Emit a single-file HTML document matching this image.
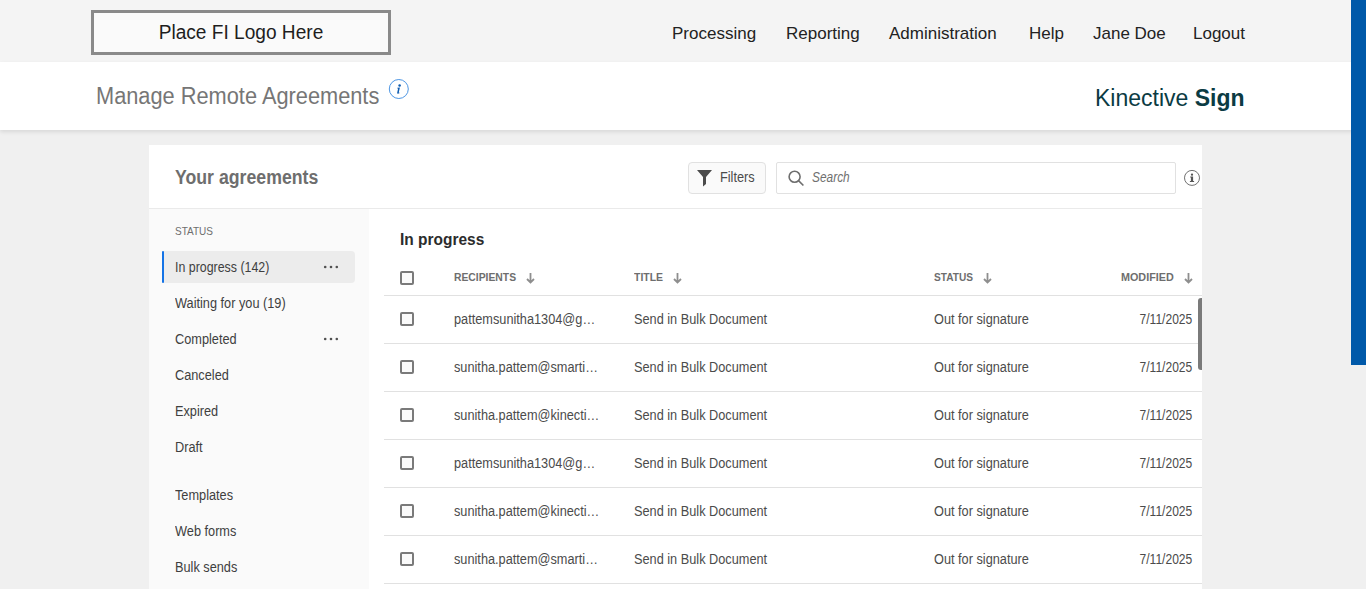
<!DOCTYPE html>
<html><head><meta charset="utf-8">
<style>
*{box-sizing:border-box;margin:0;padding:0}
html,body{width:1366px;height:589px;overflow:hidden}
body{background:#f0f0f0;font-family:"Liberation Sans",sans-serif;position:relative}
.abs{position:absolute;white-space:nowrap}
.sx{transform:scaleX(0.91);transform-origin:0 0}
.sxr{transform:scaleX(0.91);transform-origin:100% 0}
#top{left:0;top:0;width:1366px;height:62px;background:#f4f4f4}
#logo{left:91px;top:10px;width:300px;height:45px;border:3px solid #8a8a8a;background:#fafafa}
#logotxt{left:0;top:0;width:294px;height:39px;text-align:center;font-size:20px;line-height:39px;color:#1e1e1e;transform:scaleX(.955)}
.nav{top:24px;font-size:17px;color:#222;line-height:20px}
#band{left:0;top:62px;width:1366px;height:68px;background:#fff;box-shadow:0 2px 4px rgba(0,0,0,.10)}
#title{left:96px;top:83px;font-size:23px;color:#767676;line-height:26px;transform:scaleX(.947);transform-origin:0 0}
#brand{left:1095px;top:85px;font-size:23px;color:#0b3b43;line-height:26px}
#card{left:149px;top:145px;width:1053px;height:444px;background:#fff}
#yourag{left:175px;top:166px;font-size:20px;font-weight:bold;color:#6e6e6e;line-height:22px;transform:scaleX(.885)!important}
#filters{left:688px;top:162px;width:78px;height:32px;border:1px solid #e1e1e1;border-radius:4px;background:#fafafa}
#search{left:776px;top:162px;width:400px;height:32px;border:1px solid #e1e1e1;border-radius:2px;background:#fff}
#hline{left:149px;top:208px;width:1053px;height:1px;background:#eaeaea}
#side{left:149px;top:209px;width:220px;height:380px;background:#fafafa}
.side{left:175px;font-size:14px;color:#3f3f3f;line-height:16px}
#sel{left:163px;top:251px;width:192px;height:32px;background:#ececec;border-radius:0 4px 4px 0}
#selb{left:162px;top:251px;width:2px;height:32px;background:#1473e6;border-radius:1px}
.cb{left:400px;width:14px;height:14px;border:2px solid #7a7a7a;border-radius:2px;background:#fafafa}
.th{font-size:11px;font-weight:bold;color:#6e6e6e;line-height:14px}
.td{font-size:14px;color:#4b4b4b;line-height:16px}
.rl{left:384px;width:818px;height:1px;background:#e1e1e1}
#blue{left:1351px;top:0;width:15px;height:365px;background:#0059a9}
#thumb{left:1198px;top:298px;width:4px;height:72px;background:#7a7a7a;border-radius:3px 0 0 3px}
</style></head><body>
<div id="top" class="abs"></div>
<div id="logo" class="abs"><div id="logotxt" class="abs">Place FI Logo Here</div></div>
<div class="abs nav" style="left:672px">Processing</div>
<div class="abs nav" style="left:786px">Reporting</div>
<div class="abs nav" style="left:889px">Administration</div>
<div class="abs nav" style="left:1029px">Help</div>
<div class="abs nav" style="left:1093px">Jane Doe</div>
<div class="abs nav" style="left:1193px">Logout</div>
<div id="band" class="abs"></div>
<div id="title" class="abs">Manage Remote Agreements</div>
<svg class="abs" style="left:388px;top:79px" width="22" height="22" viewBox="0 0 22 22"><circle cx="10.8" cy="10" r="9.5" fill="none" stroke="#3a8ae0" stroke-width=".9"/><circle cx="11.6" cy="6.4" r="1.25" fill="#0d5bb0"/><path d="M9.3 8.7L11.9 8.4L10.8 13.2Q10.7 13.9 11.6 13.5L11.4 14.3Q9.9 15.1 9.4 14.6Q9 14.2 9.3 13.2L10.1 9.6L9.2 9.6Z" fill="#0d5bb0"/></svg>
<div id="brand" class="abs">Kinective <b>Sign</b></div>
<div id="blue" class="abs"></div>
<div id="card" class="abs"></div>
<div id="yourag" class="abs sx">Your agreements</div>
<div id="filters" class="abs"></div>
<svg class="abs" style="left:697px;top:170px" width="16" height="17" viewBox="0 0 16 17"><path d="M0 0H15L9 7V14L6 16.5V7Z" fill="#4b4b4b"/></svg>
<div class="abs td sx" style="left:720px;top:169px;color:#4b4b4b">Filters</div>
<div id="search" class="abs"></div>
<svg class="abs" style="left:786px;top:168px" width="20" height="20" viewBox="0 0 20 20"><circle cx="8.6" cy="8.7" r="5.5" fill="none" stroke="#6e6e6e" stroke-width="1.6"/><path d="M12.5 12.6L17.4 17.5" stroke="#6e6e6e" stroke-width="1.6"/></svg>
<div class="abs td sx" style="left:812px;top:169px;color:#707070;font-style:italic;transform:scaleX(.85)">Search</div>
<svg class="abs" style="left:1183px;top:169px" width="18" height="18" viewBox="0 0 18 18"><circle cx="9" cy="8.9" r="7.5" fill="none" stroke="#707070" stroke-width="1"/><circle cx="9" cy="5.7" r="1.15" fill="#555"/><path d="M7.2 7.6H10.1V12.1H11.1V13.1H6.9V12.1H7.9V8.5H7.2Z" fill="#555"/></svg>
<div id="hline" class="abs"></div>
<div id="side" class="abs"></div>
<div class="abs th sx" style="left:175px;top:224px;font-weight:normal;font-size:11px">STATUS</div>
<div id="sel" class="abs"></div>
<div id="selb" class="abs"></div>
<div class="abs side sx" style="top:259px;transform:scaleX(.885)">In progress (142)</div>
<svg class="abs" style="left:322px;top:265px" width="18" height="4"><circle cx="3.2" cy="2" r="1.3" fill="#505050"/><circle cx="9" cy="2" r="1.3" fill="#505050"/><circle cx="14.8" cy="2" r="1.3" fill="#505050"/></svg>
<div class="abs side sx" style="top:295px">Waiting for you (19)</div>
<div class="abs side sx" style="top:331px">Completed</div>
<svg class="abs" style="left:322px;top:337px" width="18" height="4"><circle cx="3.2" cy="2" r="1.3" fill="#505050"/><circle cx="9" cy="2" r="1.3" fill="#505050"/><circle cx="14.8" cy="2" r="1.3" fill="#505050"/></svg>
<div class="abs side sx" style="top:367px">Canceled</div>
<div class="abs side sx" style="top:403px">Expired</div>
<div class="abs side sx" style="top:439px">Draft</div>
<div class="abs side sx" style="top:487px">Templates</div>
<div class="abs side sx" style="top:523px">Web forms</div>
<div class="abs side sx" style="top:559px">Bulk sends</div>
<div class="abs sx" style="left:400px;top:230px;font-size:17px;font-weight:bold;color:#2c2c2c;line-height:19px">In progress</div>
<div class="abs cb" style="top:271px"></div>
<div class="abs th sx" style="left:454px;top:270px;transform:scaleX(0.94)">RECIPIENTS</div>
<svg class="abs" style="left:526px;top:273px" width="9" height="11" viewBox="0 0 9 11"><path d="M4.5 0V9.5M1 6L4.5 9.5L8 6" fill="none" stroke="#8e8e8e" stroke-width="1.8"/></svg>
<div class="abs th sx" style="left:634px;top:270px;transform:scaleX(0.95)">TITLE</div>
<svg class="abs" style="left:673px;top:273px" width="9" height="11" viewBox="0 0 9 11"><path d="M4.5 0V9.5M1 6L4.5 9.5L8 6" fill="none" stroke="#8e8e8e" stroke-width="1.8"/></svg>
<div class="abs th sx" style="left:934px;top:270px;transform:scaleX(0.92)">STATUS</div>
<svg class="abs" style="left:983px;top:273px" width="9" height="11" viewBox="0 0 9 11"><path d="M4.5 0V9.5M1 6L4.5 9.5L8 6" fill="none" stroke="#8e8e8e" stroke-width="1.8"/></svg>
<div class="abs th sx" style="left:1121px;top:270px;transform:scaleX(0.98)">MODIFIED</div>
<svg class="abs" style="left:1184px;top:273px" width="9" height="11" viewBox="0 0 9 11"><path d="M4.5 0V9.5M1 6L4.5 9.5L8 6" fill="none" stroke="#8e8e8e" stroke-width="1.8"/></svg>
<div class="abs rl" style="top:295px"></div>
<div class="abs cb" style="top:312px"></div>
<div class="abs td sx" style="left:454px;top:311px">pattemsunitha1304@g…</div>
<div class="abs td sx" style="left:634px;top:311px">Send in Bulk Document</div>
<div class="abs td sx" style="left:934px;top:311px">Out for signature</div>
<div class="abs td sxr" style="right:174px;top:311px;transform:scaleX(.86)">7/11/2025</div>
<div class="abs rl" style="top:343px"></div>
<div class="abs cb" style="top:360px"></div>
<div class="abs td sx" style="left:454px;top:359px">sunitha.pattem@smarti…</div>
<div class="abs td sx" style="left:634px;top:359px">Send in Bulk Document</div>
<div class="abs td sx" style="left:934px;top:359px">Out for signature</div>
<div class="abs td sxr" style="right:174px;top:359px;transform:scaleX(.86)">7/11/2025</div>
<div class="abs rl" style="top:391px"></div>
<div class="abs cb" style="top:408px"></div>
<div class="abs td sx" style="left:454px;top:407px">sunitha.pattem@kinecti…</div>
<div class="abs td sx" style="left:634px;top:407px">Send in Bulk Document</div>
<div class="abs td sx" style="left:934px;top:407px">Out for signature</div>
<div class="abs td sxr" style="right:174px;top:407px;transform:scaleX(.86)">7/11/2025</div>
<div class="abs rl" style="top:439px"></div>
<div class="abs cb" style="top:456px"></div>
<div class="abs td sx" style="left:454px;top:455px">pattemsunitha1304@g…</div>
<div class="abs td sx" style="left:634px;top:455px">Send in Bulk Document</div>
<div class="abs td sx" style="left:934px;top:455px">Out for signature</div>
<div class="abs td sxr" style="right:174px;top:455px;transform:scaleX(.86)">7/11/2025</div>
<div class="abs rl" style="top:487px"></div>
<div class="abs cb" style="top:504px"></div>
<div class="abs td sx" style="left:454px;top:503px">sunitha.pattem@kinecti…</div>
<div class="abs td sx" style="left:634px;top:503px">Send in Bulk Document</div>
<div class="abs td sx" style="left:934px;top:503px">Out for signature</div>
<div class="abs td sxr" style="right:174px;top:503px;transform:scaleX(.86)">7/11/2025</div>
<div class="abs rl" style="top:535px"></div>
<div class="abs cb" style="top:552px"></div>
<div class="abs td sx" style="left:454px;top:551px">sunitha.pattem@smarti…</div>
<div class="abs td sx" style="left:634px;top:551px">Send in Bulk Document</div>
<div class="abs td sx" style="left:934px;top:551px">Out for signature</div>
<div class="abs td sxr" style="right:174px;top:551px;transform:scaleX(.86)">7/11/2025</div>
<div class="abs rl" style="top:583px"></div>
<div id="thumb" class="abs"></div>
</body></html>
